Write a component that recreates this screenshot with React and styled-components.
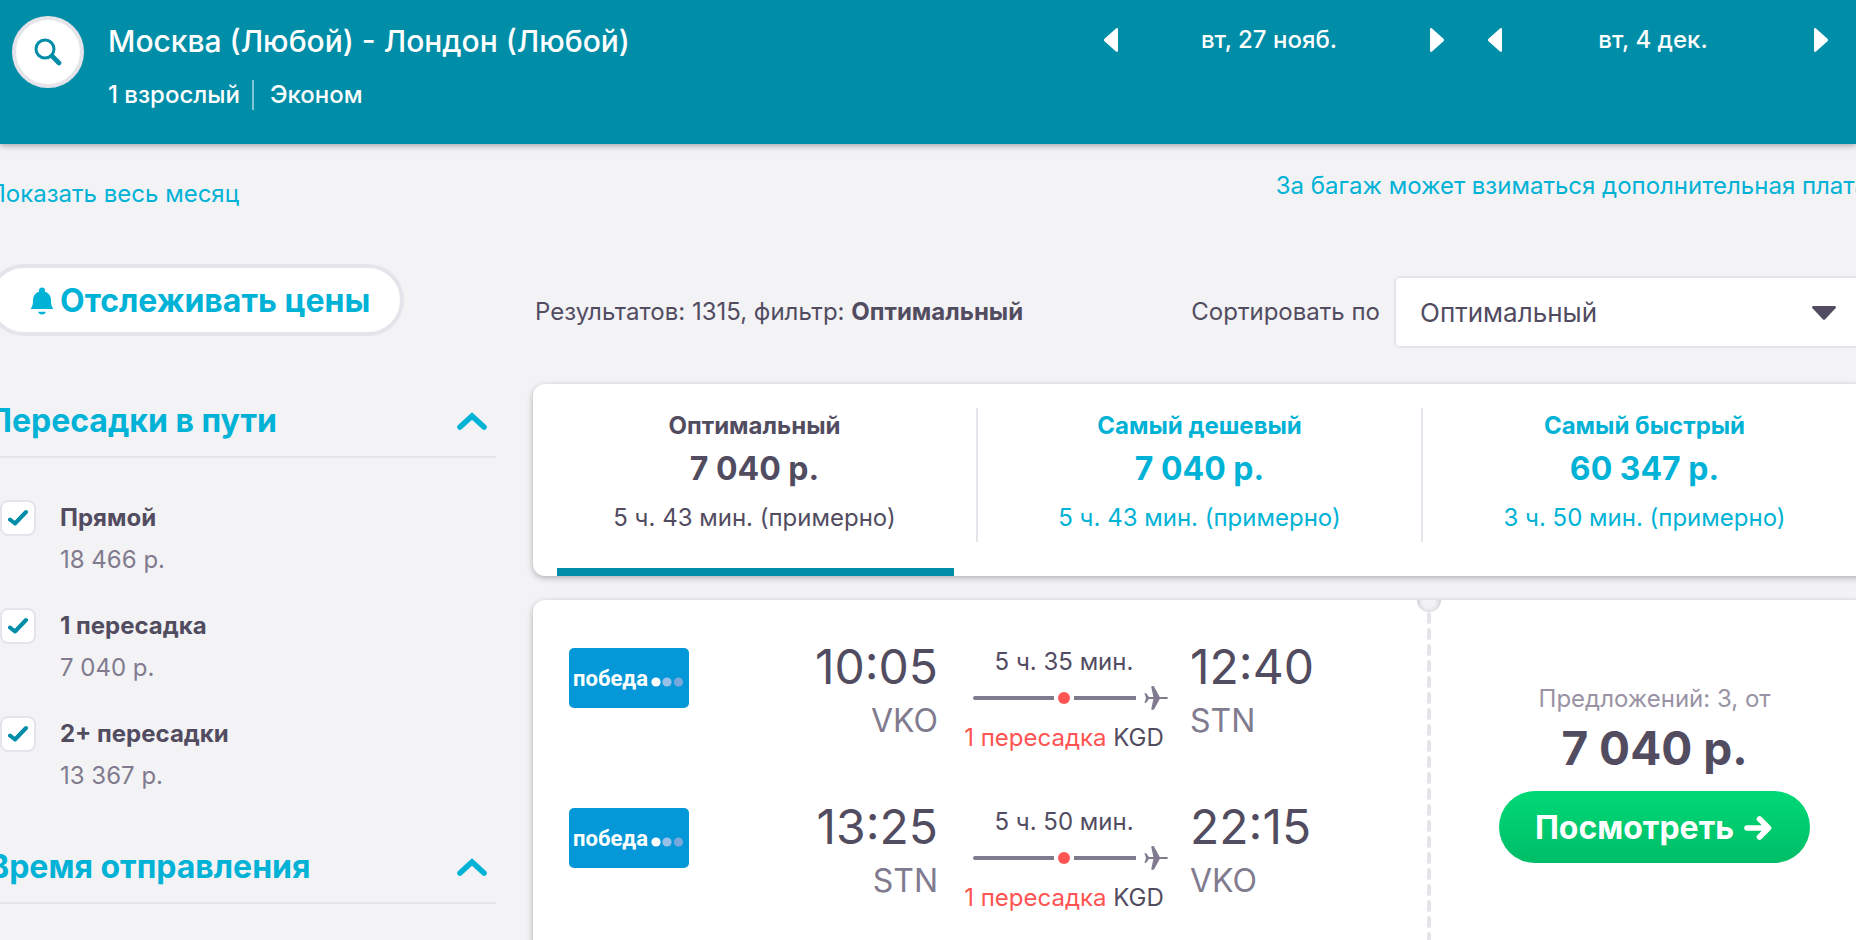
import React, { useState } from 'react';
import styled, { createGlobalStyle, css } from 'styled-components';

const color = {
  teal: '#008da8',
  link: '#00b2d6',
  ink: '#524c61',
  muted: '#817b8f',
  faint: '#9993a5',
  line: '#e6e4eb',
  page: '#f3f2f5',
  red: '#ff5452',
};

const GlobalStyle = createGlobalStyle`
  *, *::before, *::after { box-sizing: border-box; }
  body {
    margin: 0;
    background: ${color.page};
    color: ${color.ink};
    font: 400 24px/32px Inter, "Liberation Sans", sans-serif;
  }
  h1, h2, p { margin: 0; font: inherit; }
  button { padding: 0; border: 0; background: none; color: inherit; font: inherit; cursor: pointer; }
  a { text-decoration: none; }
  svg { display: block; flex: none; }
`;

const Page = styled.div`
  height: 100vh;
  overflow: hidden;
`;

const Header = styled.header`
  position: relative;
  display: flex;
  align-items: flex-start;
  height: 144px;
  padding: 16px 28px 0 12px;
  background: ${color.teal};
  color: #fff;
  font-weight: 500;
  box-shadow: 0 2px 6px rgba(0, 0, 0, 0.3);
`;

const SearchButton = styled.button`
  display: grid;
  place-items: center;
  width: 72px;
  height: 72px;
  margin-right: 24px;
  border: 4px solid ${color.line};
  border-radius: 50%;
  background: #fff;
  color: ${color.teal};
`;

const Route = styled.div`
  flex: 1;
  white-space: nowrap;
`;

const RouteTitle = styled.h1`
  font-size: 30px;
  font-weight: 500;
  line-height: 50px;
`;

const RouteDetails = styled.p`
  display: flex;
  gap: 12px;
  margin-top: 14px;
  line-height: 30px;

  span + span {
    padding-left: 16px;
    border-left: 2px solid rgba(255, 255, 255, 0.5);
  }
`;

const DateNavs = styled.div`
  display: flex;
  gap: 44px;
`;

const DateNav = styled.div`
  display: flex;
  align-items: center;
  width: 340px;
  height: 48px;

  span {
    flex: 1;
    padding-right: 10px;
    text-align: center;
  }
`;

const Main = styled.main`
  margin: 0 -12px;
`;

const Notices = styled.div`
  display: flex;
  justify-content: space-between;
  align-items: flex-start;
  height: 120px;
  padding-top: 26px;
  white-space: nowrap;
`;

const TextLink = styled.a`
  padding-top: ${(p) => (p.$low ? '8px' : '0')};
  color: ${color.link};
`;

const Columns = styled.div`
  display: grid;
  grid-template-columns: 508px minmax(0, 1fr);
  column-gap: 37px;
`;

const TrackButton = styled.button`
  display: flex;
  align-items: center;
  gap: 6px;
  height: 72px;
  padding: 2px 30px 0 38px;
  border: 4px solid ${color.line};
  border-radius: 36px;
  background: #fff;
  color: ${color.link};
  font-size: 32px;
  font-weight: 700;
  white-space: nowrap;
`;

const FilterHeading = styled.h2`
  margin-top: ${(p) => (p.$first ? '48px' : '36px')};
  border-bottom: 2px solid ${color.line};

  button {
    display: flex;
    align-items: center;
    justify-content: space-between;
    width: 100%;
    height: 72px;
    padding: 2px 8px 0 0;
    color: ${color.link};
    font-size: 32px;
    font-weight: 700;
  }
`;

const FilterList = styled.div`
  display: grid;
  gap: 30px;
  padding: 42px 0 0 12px;
`;

const FilterRow = styled.label`
  display: grid;
  grid-template-columns: 36px 1fr;
  column-gap: 24px;
  row-gap: 6px;
  line-height: 36px;
  cursor: pointer;
`;

const CheckBox = styled.span`
  display: grid;
  place-items: center;

  > * { grid-area: 1 / 1; }

  svg {
    color: ${color.teal};
    visibility: hidden;
    pointer-events: none;
  }
  input:checked + svg { visibility: visible; }
`;

const CheckInput = styled.input`
  appearance: none;
  width: 36px;
  height: 36px;
  margin: 0;
  border: 2px solid ${color.line};
  border-radius: 8px;
  background: #fff;
`;

const FilterName = styled.span`
  font-weight: 700;
`;

const FilterPrice = styled.span`
  grid-column: 2;
  color: ${color.muted};
`;

const Results = styled.section`
  padding-top: 12px;
`;

const ResultBar = styled.div`
  display: flex;
  align-items: center;
  padding-left: 2px;
  white-space: nowrap;

  label { margin: 0 14px 0 auto; }
`;

const SelectBox = styled.div`
  position: relative;
  width: 474px;

  svg {
    position: absolute;
    top: 30px;
    right: 32px;
    pointer-events: none;
  }
`;

const SortSelect = styled.select`
  appearance: none;
  display: block;
  width: 100%;
  height: 72px;
  padding: 0 60px 0 24px;
  border: 2px solid ${color.line};
  border-radius: 6px;
  background: #fff;
  color: ${color.ink};
  font: 400 26px Inter, "Liberation Sans", sans-serif;
`;

const cardLook = css`
  border-radius: 12px;
  background: #fff;
  box-shadow: 0 2px 6px rgba(0, 0, 0, 0.28);
`;

const Tabs = styled.div`
  ${cardLook}
  display: grid;
  grid-template-columns: repeat(3, 1fr);
  height: 192px;
  margin: 36px 0 24px;
`;

const Tab = styled.button`
  display: flex;
  flex-direction: column;
  justify-content: space-between;
  padding-top: 24px;
  color: ${(p) => (p.$active ? color.ink : color.link)};

  &::after {
    content: '';
    height: 8px;
    margin: 0 24px;
    align-self: stretch;
    background: ${(p) => (p.$active ? color.teal : 'transparent')};
  }
`;

const TabBody = styled.span`
  display: grid;
  width: 100%;
  border-right: 2px solid ${color.line};

  ${Tab}:last-child & { border-color: transparent; }
`;

const TabName = styled.span`
  font-weight: 700;
  line-height: 36px;
`;

const TabPrice = styled.span`
  font-size: 32px;
  font-weight: 700;
  line-height: 50px;
`;

const TabTime = styled.span`
  line-height: 48px;
`;

const Ticket = styled.article`
  ${cardLook}
  display: grid;
  grid-template-columns: minmax(0, 1fr) 24px 427px;
`;

const Legs = styled.div`
  display: grid;
  gap: 42px;
  padding: 40px 0 60px 36px;
`;

const Leg = styled.div`
  display: grid;
  grid-template-columns: 120px 1fr 208px 227px;
  column-gap: 22px;
  white-space: nowrap;
`;

const Carrier = styled.svg`
  margin-top: 8px;
  border-radius: 5px;
`;

const Stop = styled.div`
  text-align: ${(p) => p.$align};
`;

const StopTime = styled.p`
  font-size: 48px;
  line-height: 54px;
`;

const StopCode = styled.p`
  color: ${color.muted};
  font-size: 32px;
  line-height: 54px;
`;

const Journey = styled.div`
  display: flex;
  flex-direction: column;
  align-items: center;
`;

const JourneyTime = styled.p`
  line-height: 44px;
`;

const JourneyLine = styled.div`
  display: flex;
  align-items: center;
  align-self: stretch;
  height: 24px;
  margin: 2px 0 8px;
  padding-left: 13px;
`;

const Segment = styled.span`
  flex: ${(p) => p.$grow};
  height: 4px;
  border-radius: ${(p) => (p.$start ? '2px 0 0 2px' : '0')};
  background: ${color.muted};
`;

const StopDot = styled.span`
  width: 12px;
  height: 12px;
  margin: 0 4px;
  border-radius: 50%;
  background: ${color.red};
`;

const Plane = styled.span`
  margin-left: 8px;
`;

const JourneyStops = styled.p`
  line-height: 40px;

  span { color: ${color.red}; }
`;

const Perforation = styled.div`
  display: flex;
  flex-direction: column;
  align-items: center;
  overflow: hidden;

  svg { flex: 1; width: 4px; }
`;

const Notch = styled.span`
  width: 24px;
  height: 24px;
  margin-top: -12px;
  border-radius: 50%;
  background: ${color.page};
  box-shadow: inset 0 2px 6px rgba(0, 0, 0, 0.28);
`;

const Offer = styled.div`
  display: flex;
  flex-direction: column;
  align-items: center;
  justify-content: center;
  padding-bottom: 32px;
`;

const OfferCount = styled.p`
  color: ${color.faint};
`;

const OfferPrice = styled.p`
  margin: 3px 0 13px;
  font-size: 46px;
  font-weight: 700;
  line-height: 60px;
`;

const ViewButton = styled.button`
  display: flex;
  align-items: center;
  gap: 10px;
  height: 72px;
  padding: 2px 38px 0 36px;
  border-radius: 36px;
  background: linear-gradient(#00d976, #00bd68);
  color: #fff;
  font-size: 32px;
  font-weight: 700;
`;

const SearchIcon = () => (
  <svg width="28" height="28" viewBox="0 0 28 28" fill="none" stroke="currentColor" strokeLinecap="round">
    <circle cx="11" cy="11" r="9" strokeWidth="3" />
    <path d="M18 18l7 7" strokeWidth="4.6" />
  </svg>
);

const TriangleIcon = ({ flip }) => (
  <svg width="14" height="24" viewBox="0 0 14 24" fill="#fff">
    {flip ? (
      <path d="M14 1.200v21.600c0 1.100-1.300 1.600-2 .7L.5 13.200a1.800 1.800 0 0 1 0-2.400L12 .5c.7-.9 2-.4 2 .7z" />
    ) : (
      <path d="M0 1.200v21.600c0 1.100 1.300 1.600 2 .7l11.500-10.300a1.800 1.800 0 0 0 0-2.400L2 .5C1.300-.4 0 .1 0 1.200z" />
    )}
  </svg>
);

const BellIcon = () => (
  <svg width="24" height="28" viewBox="0 0 24 28" fill="currentColor">
    <path d="M12 .5a3 3 0 0 1 3 3v1.200c4 1.300 6 4.600 6 8.800 0 4 .6 6 2.500 8.500H.5C2.400 19.500 3 17.500 3 13.500c0-4.200 2-7.500 6-8.800V3.500a3 3 0 0 1 3-3z" />
    <path d="M8 24.800h8c-.5 1.600-2 2.700-4 2.700s-3.500-1.100-4-2.700z" />
  </svg>
);

const ChevronIcon = () => (
  <svg width="32" height="20" viewBox="0 0 32 20" fill="none" stroke="currentColor" strokeWidth="5.600" strokeLinecap="round">
    <path d="M4 16L16 5l12 11" />
  </svg>
);

const CheckIcon = () => (
  <svg width="20" height="18" viewBox="0 0 20 18" fill="none" stroke="currentColor" strokeWidth="4" strokeLinecap="round" strokeLinejoin="round">
    <path d="M2 10.500l5 4L18 3" />
  </svg>
);

const DownIcon = () => (
  <svg width="24" height="14" viewBox="0 0 24 14" fill={color.ink}>
    <path d="M1.500 0h21c1.300 0 2 1.400 1 2.300L13.200 13.200a1.700 1.700 0 0 1-2.400 0L.5 2.300C-.5 1.400.2 0 1.500 0z" />
  </svg>
);

const PlaneIcon = () => (
  <svg width="24" height="24" viewBox="0 0 24 24" fill={color.muted}>
    <path d="M22.300 11c2 0 2.200 2 0 2h-6.600L10.600 22.500c-.5.900-1 1.400-1.800 1.400-.9 0-1.700-.3-1.500-1.100L9.400 13H4.900L2.600 16.200c-.5.6-1.200.9-2.200.7L2 12 .4 7.100c1-.2 1.700.1 2.200.7L4.900 11h4.500L7.300 1.200C7.100.4 7.900.1 8.800.1c.8 0 1.300.5 1.800 1.400L15.700 11z" />
  </svg>
);

const ArrowIcon = () => (
  <svg width="28" height="24" viewBox="0 0 28 24" fill="none" stroke="currentColor" strokeWidth="5.600" strokeLinecap="round" strokeLinejoin="round">
    <path d="M3 12h21M15.500 3l9 9-9 9" />
  </svg>
);

const PobedaLogo = () => (
  <Carrier width="120" height="60" viewBox="0 0 120 60" role="img" aria-label="победа">
    <rect width="120" height="60" fill="#0498d8" />
    <text x="4" y="38" fill="#fff" fontFamily="Roboto, sans-serif" fontSize="22" fontWeight="700">победа</text>
    <circle cx="87" cy="34" r="4.600" fill="#fff" />
    <circle cx="98" cy="34" r="4.600" fill="#98c0e8" />
    <circle cx="109.500" cy="34" r="4.600" fill="#78a8dc" />
  </Carrier>
);

const dates = ['вт, 27 нояб.', 'вт, 4 дек.'];

const stopFilters = [
  { name: 'Прямой', price: '18 466 р.' },
  { name: '1 пересадка', price: '7 040 р.' },
  { name: '2+ пересадки', price: '13 367 р.' },
];

const sortTabs = [
  { name: 'Оптимальный', price: '7 040 р.', time: '5 ч. 43 мин. (примерно)' },
  { name: 'Самый дешевый', price: '7 040 р.', time: '5 ч. 43 мин. (примерно)' },
  { name: 'Самый быстрый', price: '60 347 р.', time: '3 ч. 50 мин. (примерно)' },
];

const legs = [
  { from: 'VKO', depart: '10:05', to: 'STN', arrive: '12:40', time: '5 ч. 35 мин.' },
  { from: 'STN', depart: '13:25', to: 'VKO', arrive: '22:15', time: '5 ч. 50 мин.' },
];

export default function App() {
  const [active, setActive] = useState(0);

  return (
    <Page>
      <GlobalStyle />
      <Header>
        <SearchButton aria-label="Поиск"><SearchIcon /></SearchButton>
        <Route>
          <RouteTitle>Москва (Любой) - Лондон (Любой)</RouteTitle>
          <RouteDetails><span>1 взрослый</span><span>Эконом</span></RouteDetails>
        </Route>
        <DateNavs>
          {dates.map((date) => (
            <DateNav key={date}>
              <button aria-label="Предыдущий день"><TriangleIcon flip /></button>
              <span>{date}</span>
              <button aria-label="Следующий день"><TriangleIcon /></button>
            </DateNav>
          ))}
        </DateNavs>
      </Header>

      <Main>
        <Notices>
          <TextLink href="#month" $low>Показать весь месяц</TextLink>
          <TextLink href="#baggage">За багаж может взиматься дополнительная плата</TextLink>
        </Notices>

        <Columns>
          <aside>
            <TrackButton><BellIcon />Отслеживать цены</TrackButton>
            <FilterHeading $first>
              <button aria-expanded="true">Пересадки в пути<ChevronIcon /></button>
            </FilterHeading>
            <FilterList>
              {stopFilters.map(({ name, price }) => (
                <FilterRow key={name}>
                  <CheckBox>
                    <CheckInput type="checkbox" defaultChecked />
                    <CheckIcon />
                  </CheckBox>
                  <FilterName>{name}</FilterName>
                  <FilterPrice>{price}</FilterPrice>
                </FilterRow>
              ))}
            </FilterList>
            <FilterHeading>
              <button aria-expanded="true">Время отправления<ChevronIcon /></button>
            </FilterHeading>
          </aside>

          <Results>
            <ResultBar>
              <p>Результатов: 1315, фильтр: <b>Оптимальный</b></p>
              <label htmlFor="sort">Сортировать по</label>
              <SelectBox>
                <SortSelect id="sort" value={active} onChange={(e) => setActive(Number(e.target.value))}>
                  {sortTabs.map(({ name }, i) => <option key={name} value={i}>{name}</option>)}
                </SortSelect>
                <DownIcon />
              </SelectBox>
            </ResultBar>

            <Tabs>
              {sortTabs.map(({ name, price, time }, i) => (
                <Tab key={name} $active={i === active} aria-pressed={i === active} onClick={() => setActive(i)}>
                  <TabBody>
                    <TabName>{name}</TabName>
                    <TabPrice>{price}</TabPrice>
                    <TabTime>{time}</TabTime>
                  </TabBody>
                </Tab>
              ))}
            </Tabs>

            <Ticket>
              <Legs>
                {legs.map((leg) => (
                  <Leg key={leg.depart}>
                    <PobedaLogo />
                    <Stop $align="right">
                      <StopTime>{leg.depart}</StopTime>
                      <StopCode>{leg.from}</StopCode>
                    </Stop>
                    <Journey>
                      <JourneyTime>{leg.time}</JourneyTime>
                      <JourneyLine>
                        <Segment $grow={81} $start />
                        <StopDot />
                        <Segment $grow={62} />
                        <Plane><PlaneIcon /></Plane>
                      </JourneyLine>
                      <JourneyStops><span>1 пересадка</span> KGD</JourneyStops>
                    </Journey>
                    <Stop $align="left">
                      <StopTime>{leg.arrive}</StopTime>
                      <StopCode>{leg.to}</StopCode>
                    </Stop>
                  </Leg>
                ))}
              </Legs>
              <Perforation>
                <Notch />
                <svg aria-hidden="true">
                  <line x1="2" y1="2" x2="2" y2="2000" stroke={color.line} strokeWidth="4" strokeLinecap="round" strokeDasharray="8 8" />
                </svg>
              </Perforation>
              <Offer>
                <OfferCount>Предложений: 3, от</OfferCount>
                <OfferPrice>7 040 р.</OfferPrice>
                <ViewButton>Посмотреть<ArrowIcon /></ViewButton>
              </Offer>
            </Ticket>
          </Results>
        </Columns>
      </Main>
    </Page>
  );
}
